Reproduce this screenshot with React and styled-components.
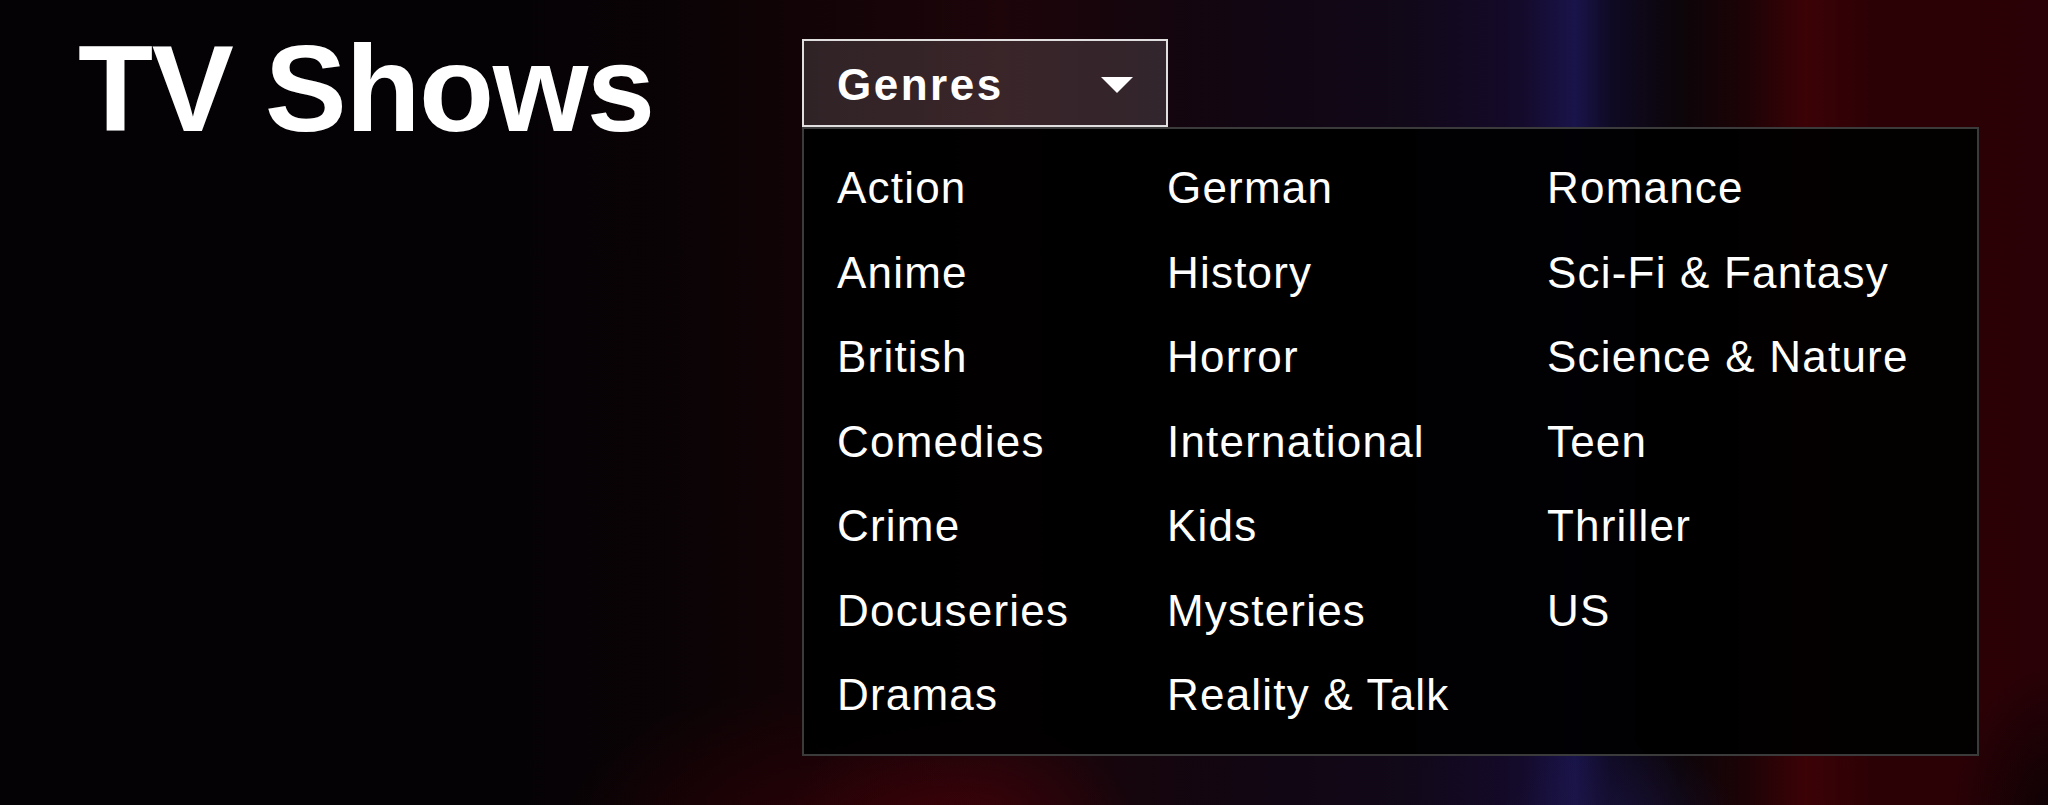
import React from 'react';
import styled, { createGlobalStyle } from 'styled-components';

const GlobalStyle = createGlobalStyle`
  html, body {
    margin: 0;
    padding: 0;
    background: #040205;
  }
  body {
    font-family: "Liberation Sans", Arial, sans-serif;
    overflow: hidden;
  }
  * { box-sizing: border-box; }
`;

const Page = styled.div`
  width: 100%;
  height: 805px;
  display: flex;
  align-items: flex-start;
  padding: 27px 0 0 78px;
  background:
    radial-gradient(ellipse 110px 160px at 2060px 820px, rgba(6, 2, 4, 0.85), rgba(6, 2, 4, 0)),
    radial-gradient(ellipse 180px 110px at 960px 830px, rgba(72, 0, 8, 0.75), rgba(72, 0, 8, 0)),
    radial-gradient(ellipse 230px 150px at 790px 840px, rgba(48, 0, 6, 0.7), rgba(48, 0, 6, 0)),
    radial-gradient(ellipse 120px 90px at 1620px 830px, rgba(30, 22, 70, 0.6), rgba(30, 22, 70, 0)),
    linear-gradient(
      to right,
      #040205 0px,
      #050205 520px,
      #0b0305 700px,
      #110306 790px,
      #170408 900px,
      #1d050a 1000px,
      #16050c 1120px,
      #110612 1250px,
      #110818 1400px,
      #140a2a 1520px,
      #19144a 1575px,
      #0f0a24 1610px,
      #0c0509 1680px,
      #1c0306 1745px,
      #3c0206 1805px,
      #2c0105 1870px,
      #2a0106 2048px
    );
`;

const Title = styled.h1`
  flex: 0 0 724px;
  margin: 0;
  font-size: 123px;
  line-height: 123px;
  font-weight: 700;
  letter-spacing: -1.5px;
  color: #ffffff;
`;

const Dropdown = styled.div`
  position: relative;
  margin-top: 12px;
`;

const Toggle = styled.button`
  width: 366px;
  height: 88px;
  display: flex;
  align-items: center;
  justify-content: space-between;
  padding: 4px 33px 0 33px;
  border: 2px solid rgba(255, 255, 255, 0.85);
  background: rgba(255, 255, 255, 0.13);
  color: #ffffff;
  font-family: inherit;
  font-size: 44px;
  font-weight: 700;
  letter-spacing: 2.5px;
  line-height: 1;
  cursor: pointer;
`;

const Caret = styled.svg`
  width: 32px;
  height: 16px;
  flex: 0 0 auto;
`;

const Menu = styled.ul`
  position: absolute;
  top: 100%;
  left: 0;
  width: 1177px;
  margin: 0;
  padding: 17px 0 16px 33px;
  list-style: none;
  display: grid;
  grid-auto-flow: column;
  grid-template-rows: repeat(7, 84.5px);
  grid-template-columns: 330px 380px 1fr;
  background: rgba(0, 0, 0, 0.93);
  border: 2px solid #3b3b3b;
`;

const Item = styled.li`
  font-size: 44px;
  line-height: 84.5px;
  letter-spacing: 1.2px;
  color: #ffffff;
  white-space: nowrap;
  cursor: pointer;
`;

const genres = [
  'Action', 'Anime', 'British', 'Comedies', 'Crime', 'Docuseries', 'Dramas',
  'German', 'History', 'Horror', 'International', 'Kids', 'Mysteries', 'Reality & Talk',
  'Romance', 'Sci-Fi & Fantasy', 'Science & Nature', 'Teen', 'Thriller', 'US',
];

export default function App() {
  return (
    <>
      <GlobalStyle />
      <Page>
        <Title>TV Shows</Title>
        <Dropdown>
          <Toggle type="button">
            <span>Genres</span>
            <Caret viewBox="0 0 32 16" aria-hidden="true">
              <polygon points="0,0 32,0 16,16" fill="#ffffff" />
            </Caret>
          </Toggle>
          <Menu>
            {genres.map((g) => (
              <Item key={g}>{g}</Item>
            ))}
          </Menu>
        </Dropdown>
      </Page>
    </>
  );
}
